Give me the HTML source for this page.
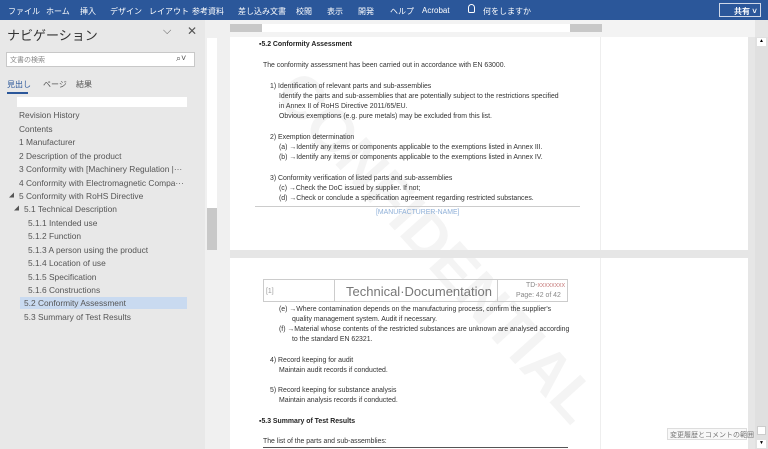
<!DOCTYPE html>
<html><head><meta charset="utf-8"><style>
*{margin:0;padding:0;box-sizing:border-box}
body{width:768px;height:449px;overflow:hidden;background:#e6e6e6;font-family:"Liberation Sans","Noto Sans CJK JP",sans-serif;position:relative}
.a{position:absolute;white-space:nowrap}
#top{left:0;top:0;width:768px;height:20px;background:#2b579a;color:#fff;font-size:8px}
#nav{left:0;top:20px;width:205px;height:429px;background:#e8e8e8;color:#555}
.n{font-size:8.4px;color:#555}
#doc{font-size:6.9px;color:#333}
</style></head><body>
<div class="a" id="top">
<span class="a" style="left:8px;top:6px">ファイル</span>
<span class="a" style="left:46px;top:6px">ホーム</span>
<span class="a" style="left:80px;top:6px">挿入</span>
<span class="a" style="left:110px;top:6px">デザイン</span>
<span class="a" style="left:149px;top:6px">レイアウト</span>
<span class="a" style="left:192px;top:6px">参考資料</span>
<span class="a" style="left:238px;top:6px">差し込み文書</span>
<span class="a" style="left:296px;top:6px">校閲</span>
<span class="a" style="left:327px;top:6px">表示</span>
<span class="a" style="left:358px;top:6px">開発</span>
<span class="a" style="left:390px;top:6px">ヘルプ</span>
<span class="a" style="left:422px;top:6px">Acrobat</span>
<span class="a" style="left:468px;top:4px;width:7px;height:9px;border:1.2px solid #fff;border-radius:4px 4px 2px 2px"></span>
<span class="a" style="left:483px;top:6px">何をしますか</span>
<div class="a" style="left:719px;top:3px;width:42px;height:14px;border:1px solid #cfd8e8;font-weight:bold;padding:2px 0 0 14px">共有 ˅</div>
</div>
<div class="a" id="nav">
<div class="a" style="left:7px;top:5px;font-size:13px;color:#333">ナビゲーション</div>
<div class="a" style="left:163px;top:5px;font-size:11px;color:#555">⌵</div>
<div class="a" style="left:187px;top:4px;font-size:12px;color:#555">✕</div>
<div class="a" style="left:6px;top:32px;width:189px;height:15px;background:#fff;border:1px solid #c8c8c8"></div>
<div class="a n" style="left:10px;top:35px;font-size:7px;color:#888">文書の検索</div>
<div class="a n" style="left:176px;top:33px;font-size:9px">⌕˅</div>
<div class="a" style="left:7px;top:59px;font-size:8px;color:#2b579a">見出し</div>
<div class="a" style="left:7px;top:72px;width:21px;height:2px;background:#2b579a"></div>
<div class="a n" style="left:43px;top:59px;font-size:8px">ページ</div>
<div class="a n" style="left:76px;top:59px;font-size:8px">結果</div>
<div class="a" style="left:17px;top:77px;width:170px;height:10px;background:#fff"></div>
<div class="a" style="left:20px;top:277px;width:167px;height:12px;background:#c9daf0"></div>
<div class="a n" style="left:19px;top:90px">Revision History</div>
<div class="a n" style="left:19px;top:104px">Contents</div>
<div class="a n" style="left:19px;top:117px">1 Manufacturer</div>
<div class="a n" style="left:19px;top:131px">2 Description of the product</div>
<div class="a n" style="left:19px;top:144px">3 Conformity with [Machinery Regulation |···</div>
<div class="a n" style="left:19px;top:158px">4 Conformity with Electromagnetic Compa···</div>
<div class="a n" style="left:9px;top:172px;font-size:5px">◢</div>
<div class="a n" style="left:19px;top:171px">5 Conformity with RoHS Directive</div>
<div class="a n" style="left:14px;top:185px;font-size:5px">◢</div>
<div class="a n" style="left:24px;top:184px">5.1 Technical Description</div>
<div class="a n" style="left:28px;top:198px">5.1.1 Intended use</div>
<div class="a n" style="left:28px;top:211px">5.1.2 Function</div>
<div class="a n" style="left:28px;top:225px">5.1.3 A person using the product</div>
<div class="a n" style="left:28px;top:238px">5.1.4 Location of use</div>
<div class="a n" style="left:28px;top:252px">5.1.5 Specification</div>
<div class="a n" style="left:28px;top:265px">5.1.6 Constructions</div>
<div class="a n" style="left:24px;top:278px">5.2 Conformity Assessment</div>
<div class="a n" style="left:24px;top:292px">5.3 Summary of Test Results</div>
</div>
<div class="a" style="left:205px;top:20px;width:25px;height:429px;background:#f0f0f0"></div>
<div class="a" style="left:207px;top:38px;width:10px;height:170px;background:#fff"></div>
<div class="a" style="left:207px;top:208px;width:10px;height:42px;background:#c8c8c8"></div>
<div class="a" style="left:230px;top:20px;width:525px;height:17px;background:#f3f3f3"></div>
<div class="a" style="left:262px;top:24px;width:308px;height:8px;background:#fff"></div>
<div class="a" style="left:230px;top:24px;width:32px;height:8px;background:#c8c8c8"></div>
<div class="a" style="left:570px;top:24px;width:32px;height:8px;background:#c8c8c8"></div>
<div class="a" style="left:755px;top:37px;width:13px;height:412px;background:#e0e0e0"></div>
<div class="a" style="left:757px;top:38px;width:9px;height:8px;background:#fff;font-size:5px;text-align:center">▲</div>
<div class="a" style="left:757px;top:440px;width:9px;height:8px;background:#fff;font-size:5px;text-align:center">▼</div>
<div class="a" style="left:230px;top:37px;width:518px;height:213px;background:#fff"></div>
<div class="a" style="left:230px;top:258px;width:518px;height:191px;background:#fff"></div>
<div class="a" style="left:600px;top:37px;width:1px;height:213px;background:#eee"></div>
<div class="a" style="left:600px;top:258px;width:1px;height:191px;background:#eee"></div>
<div class="a" style="left:215px;top:210px;width:440px;text-align:center;font-size:60px;font-weight:bold;color:#f4f4f4;transform:rotate(48deg)">CONFIDENTIAL</div>
<div class="a" style="left:230px;top:250px;width:518px;height:8px;background:#e6e6e6"></div>
<div id="doc">
<div class="a" style="left:259px;top:41px;font-weight:bold;color:#222">▪5.2 Conformity Assessment</div>
<div class="a" style="left:263px;top:62px">The conformity assessment has been carried out in accordance with EN 63000.</div>
<div class="a" style="left:270px;top:83px">1) Identification of relevant parts and sub-assemblies</div>
<div class="a" style="left:279px;top:93px">Identify the parts and sub-assemblies that are potentially subject to the restrictions specified</div>
<div class="a" style="left:279px;top:103px">in Annex II of RoHS Directive 2011/65/EU.</div>
<div class="a" style="left:279px;top:113px">Obvious exemptions (e.g. pure metals) may be excluded from this list.</div>
<div class="a" style="left:270px;top:134px">2) Exemption determination</div>
<div class="a" style="left:279px;top:144px">(a) →Identify any items or components applicable to the exemptions listed in Annex III.</div>
<div class="a" style="left:279px;top:154px">(b) →Identify any items or components applicable to the exemptions listed in Annex IV.</div>
<div class="a" style="left:270px;top:175px">3) Conformity verification of listed parts and sub-assemblies</div>
<div class="a" style="left:279px;top:185px">(c) →Check the DoC issued by supplier. If not;</div>
<div class="a" style="left:279px;top:195px">(d) →Check or conclude a specification agreement regarding restricted substances.</div>
<div class="a" style="left:255px;top:206px;width:325px;height:1px;background:#ccc"></div>
<div class="a" style="left:376px;top:209px;color:#8fb0d8">[MANUFACTURER-NAME]</div>
<div class="a" style="left:263px;top:279px;width:305px;height:23px;border:1px solid #ccc"></div>
<div class="a" style="left:334px;top:279px;width:1px;height:23px;background:#ccc"></div>
<div class="a" style="left:497px;top:279px;width:1px;height:23px;background:#ccc"></div>
<div class="a" style="left:266px;top:288px;color:#999">[1]</div>
<div class="a" style="left:346px;top:284px;font-size:13px;color:#777">Technical·Documentation</div>
<div class="a" style="left:526px;top:282px;color:#888">TD-<span style="color:#c88">xxxxxxxx</span></div>
<div class="a" style="left:516px;top:292px;color:#888">Page: 42 of 42</div>
<div class="a" style="left:279px;top:306px">(e) →Where contamination depends on the manufacturing process, confirm the supplier's</div>
<div class="a" style="left:292px;top:316px">quality management system. Audit if necessary.</div>
<div class="a" style="left:279px;top:326px">(f) →Material whose contents of the restricted substances are unknown are analysed according</div>
<div class="a" style="left:292px;top:336px">to the standard EN 62321.</div>
<div class="a" style="left:270px;top:357px">4) Record keeping for audit</div>
<div class="a" style="left:279px;top:367px">Maintain audit records if conducted.</div>
<div class="a" style="left:270px;top:387px">5) Record keeping for substance analysis</div>
<div class="a" style="left:279px;top:397px">Maintain analysis records if conducted.</div>
<div class="a" style="left:259px;top:418px;font-weight:bold;color:#222">▪5.3 Summary of Test Results</div>
<div class="a" style="left:263px;top:438px">The list of the parts and sub-assemblies:</div>
<div class="a" style="left:263px;top:447px;width:305px;height:1px;background:#555"></div>
</div>
<div class="a" style="left:667px;top:428px;width:80px;height:12px;border:1px solid #ddd;background:#f8f8f8;font-size:7px;color:#777;padding:1px 2px">変更履歴とコメントの範囲</div>
<div class="a" style="left:757px;top:426px;width:9px;height:9px;background:#fff;border:1px solid #ccc"></div>
</body></html>
